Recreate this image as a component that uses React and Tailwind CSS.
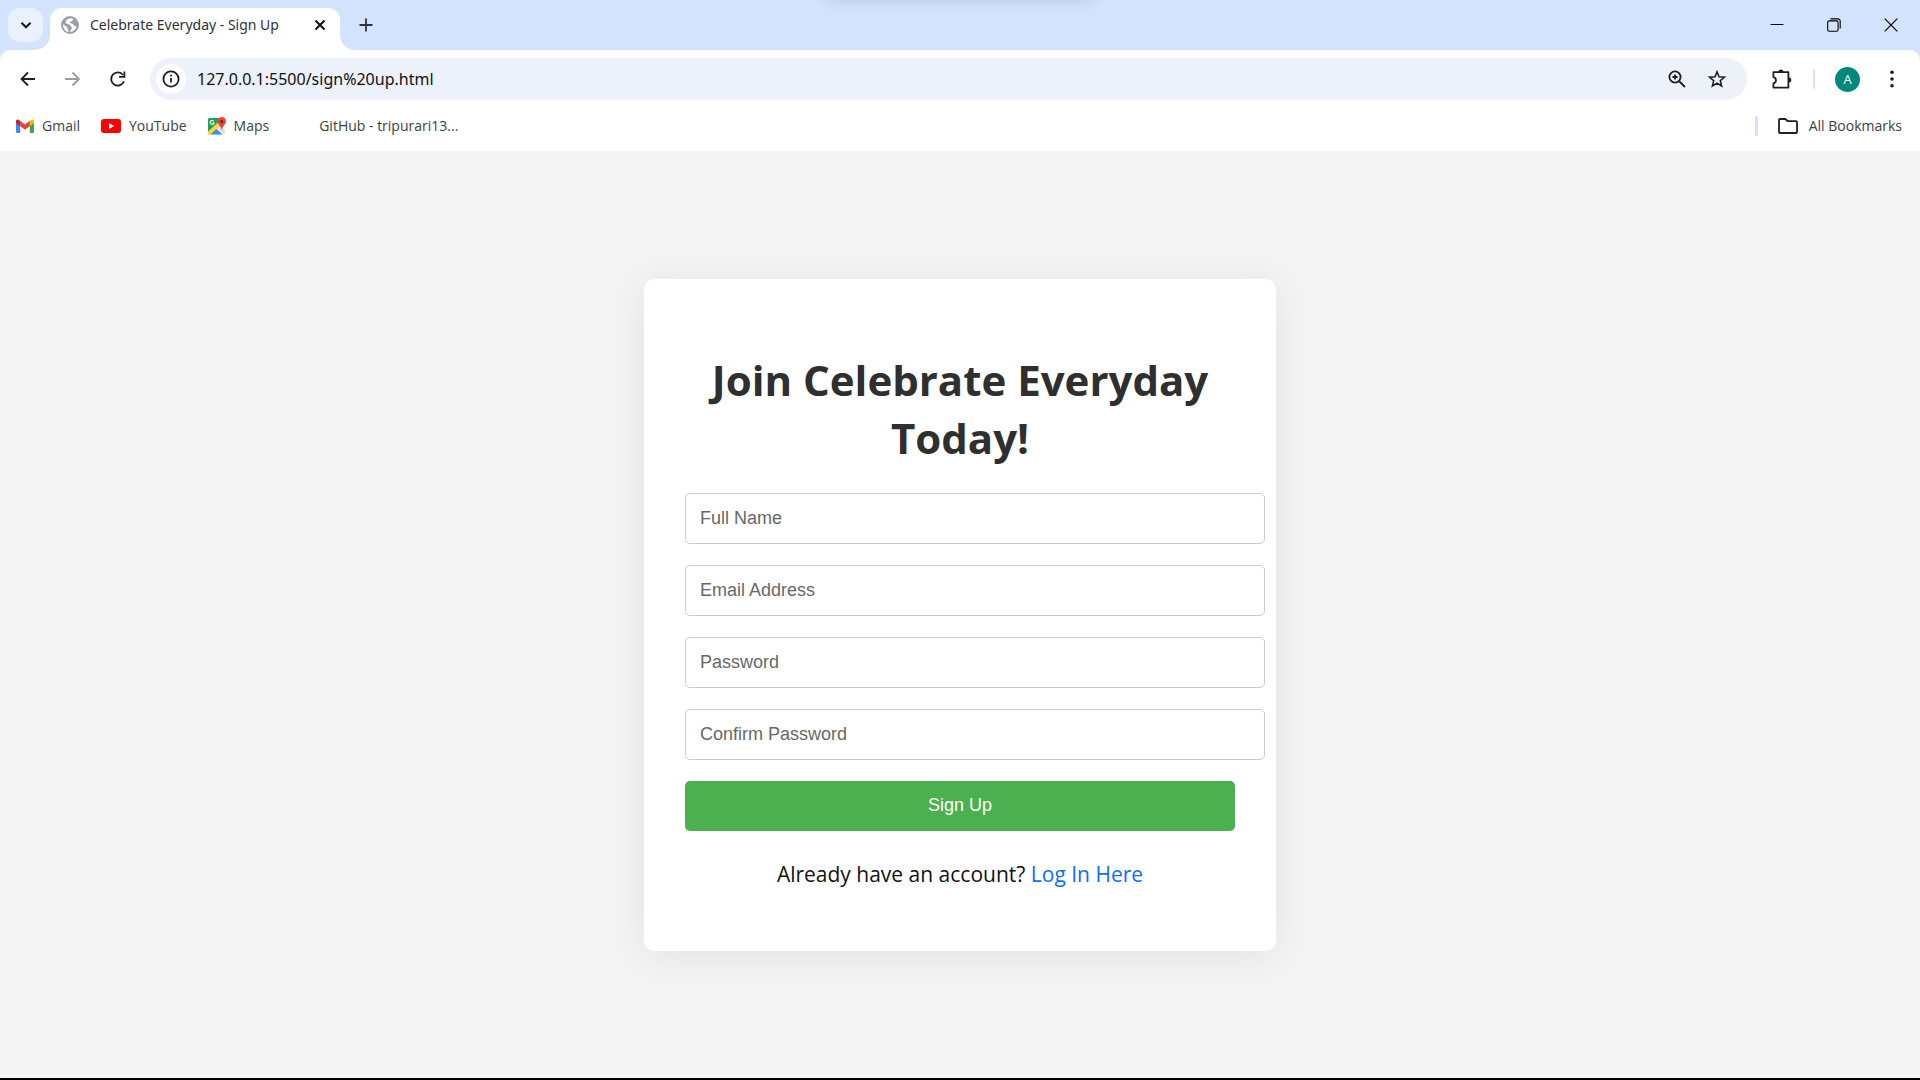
import React from "react";

const ui = "font-['Open_Sans','Noto_Sans',sans-serif]";

function Icon({ size = 20, vb = 20, className = "", children }) {
  return (
    <svg
      width={size}
      height={size}
      viewBox={`0 0 ${vb} ${vb}`}
      fill="none"
      stroke="currentColor"
      strokeWidth="1.8"
      className={`shrink-0 ${className}`}
      aria-hidden="true"
    >
      {children}
    </svg>
  );
}

function GlobeIcon() {
  return (
    <svg width="18" height="18" viewBox="0 0 18 18" className="shrink-0" aria-hidden="true">
      <circle cx="9" cy="9" r="9" fill="#9aa0a6" />
      <path d="M9.3 2.2 C7 2.6 4.8 4 4.6 6 C4.6 7.6 6 8.2 7.6 8.2 C9.2 8.2 9.6 9 9.6 10 C9.6 10.8 10.6 11 11 11.4 C11 12.6 10 13.4 9.4 14.4 L9.2 16 C11.8 15.9 14.6 14 15.6 11 C14.6 9.8 13.2 10 12.4 9 C12 8 11 7.2 9.6 7.2 C8.6 7 8.6 5.8 9.8 5.6 C11.2 5.4 11.4 4.4 12.2 3 C11.4 2.4 10.4 2.1 9.3 2.2 Z" fill="#fff" />
      <path d="M2 8.2 L5.8 11 C7 11.8 6.4 13 7.2 14 L7.6 15.9 C4.4 15.4 1.8 12.4 2 8.2 Z" fill="#fff" />
    </svg>
  );
}

function GmailIcon() {
  return (
    <svg width="18" height="14" viewBox="0 0 18 14" className="shrink-0" aria-hidden="true">
      <path d="M0 3 L4.2 6 V14 H1.3 A1.3 1.3 0 0 1 0 12.7 Z" fill="#4285f4" />
      <path d="M18 3 L13.8 6 V14 H16.7 A1.3 1.3 0 0 0 18 12.7 Z" fill="#34a853" />
      <path d="M13.8 2 L15 1 C16.2 0 18 .7 18 2.2 V4 L13.8 7.2 Z" fill="#fbbc04" />
      <path d="M0 4 V2.2 C0 .7 1.8 0 3 1 L4.2 2 V7.2 Z" fill="#c5221f" />
      <path d="M4.2 1.8 L9 5.4 L13.8 1.8 V7.2 L9 10.8 L4.2 7.2 Z" fill="#ea4335" />
    </svg>
  );
}

function YouTubeIcon() {
  return (
    <svg width="20" height="14" viewBox="0 0 20 14" className="shrink-0" aria-hidden="true">
      <rect width="20" height="14" rx="3" fill="#f00" />
      <path d="M8 4 L13.2 7 L8 10 Z" fill="#fff" />
    </svg>
  );
}

function MapsIcon() {
  return (
    <svg width="18" height="18" viewBox="0 0 18 18" className="shrink-0" aria-hidden="true">
      <rect x="0" y="1" width="16.5" height="16.5" rx="1.5" fill="#e8eaed" />
      <path d="M1.5 1 H11 L12.5 5 L0 17 V2.5 A1.5 1.5 0 0 1 1.5 1 Z" fill="#1e9e58" />
      <path d="M0 14.5 L11.5 4 L14 7 L3 17.5 H0 Z" fill="#fdd835" />
      <path d="M2.5 17.5 L8.3 12 L14.5 17.5 Z" fill="#4285f4" />
      <path d="M9.5 11 L12.5 8.5 L16.5 12.5 V17 Z" fill="#dadce0" />
      <path d="M5.8 4.4 A2 2 0 1 0 6 6 H4.4" fill="none" stroke="#fff" strokeWidth="1.1" />
      <path d="M13.7 0 A4.3 4.3 0 0 1 18 4.3 C18 7.5 14.6 8.6 13.9 12.5 H13.5 C12.8 8.6 9.4 7.5 9.4 4.3 A4.3 4.3 0 0 1 13.7 0 Z" fill="#ea4335" />
      <circle cx="13.7" cy="4.4" r="1.5" fill="#7a1c14" />
    </svg>
  );
}

function TabStrip() {
  return (
    <div className="relative flex h-[50px] items-start bg-[#d3e3fd] pl-2 pt-2">
      <div className="pointer-events-none absolute inset-x-0 top-0 flex h-4 justify-center overflow-hidden">
        <div className="-mt-5 h-5 w-[270px] rounded-xl shadow-[0_0_14px_rgba(60,80,110,0.2)]" />
      </div>
      <button type="button" aria-label="Search tabs" className="flex h-[34px] w-[35px] items-center justify-center rounded-xl bg-[#e9f1fe] text-[#1f1f1f]">
        <Icon size={12} vb={12}>
          <path d="M1.5 3.8 L6 8.2 L10.5 3.8" stroke="#111" strokeWidth="2.1" />
        </Icon>
      </button>
      <div className="relative ml-[7px] flex h-[42px] w-[290px] items-center rounded-t-xl bg-white pb-2 pl-[11px] pr-[13px]">
        <svg className="absolute -left-[15px] bottom-0" width="15" height="15" aria-hidden="true">
          <path d="M15 0 A15 15 0 0 1 0 15 H15 Z" fill="#fff" />
        </svg>
        <svg className="absolute -right-[15px] bottom-0" width="15" height="15" aria-hidden="true">
          <path d="M0 0 A15 15 0 0 0 15 15 H0 Z" fill="#fff" />
        </svg>
        <GlobeIcon />
        <span className="ml-[11px] flex-1 whitespace-nowrap font-['Noto_Sans',sans-serif] text-[14px] leading-5 text-[#303236]">Celebrate Everyday - Sign Up</span>
        <button type="button" aria-label="Close tab" className="flex h-[14px] w-[14px] items-center justify-center">
          <Icon size={12} vb={12}>
            <path d="M1.5 1.5 L10.5 10.5 M10.5 1.5 L1.5 10.5" stroke="#111" strokeWidth="2" />
          </Icon>
        </button>
      </div>
      <button type="button" aria-label="New tab" className="ml-4 flex h-[34px] w-5 items-center justify-center text-[#303236]">
        <Icon size={14} vb={14}>
          <path d="M7 .5 V13.5 M.5 7 H13.5" />
        </Icon>
      </button>
      <div className="ml-auto flex h-[34px] items-center text-black">
        <button type="button" aria-label="Minimize" className="flex h-8 w-[57px] items-center justify-center">
          <Icon size={14} vb={14}>
            <path d="M.5 6.5 H13.5" strokeWidth="1" />
          </Icon>
        </button>
        <button type="button" aria-label="Restore" className="flex h-8 w-[57px] items-center justify-center">
          <Icon size={14} vb={14}>
            <rect x=".7" y="2.9" width="10.4" height="10.4" rx="1.6" strokeWidth="1.1" />
            <path d="M3.4 .9 H11 A2.2 2.2 0 0 1 13.2 3.1 V10.6" strokeWidth="1.1" />
          </Icon>
        </button>
        <button type="button" aria-label="Close" className="flex h-8 w-[58px] items-center justify-center">
          <Icon size={14} vb={14}>
            <path d="M.7 .7 L13.3 13.3 M13.3 .7 L.7 13.3" strokeWidth="1.2" />
          </Icon>
        </button>
      </div>
    </div>
  );
}

function Toolbar() {
  return (
    <div className="flex h-[58px] items-center pl-[17px] pr-[18px] text-[#1f1f1f]">
      <button type="button" aria-label="Back">
        <Icon>
          <path d="M18 10 H4.5 M11 3.5 L4.5 10 L11 16.5" />
        </Icon>
      </button>
      <button type="button" aria-label="Forward" className="ml-[25px] text-[#9c9c9c]">
        <Icon>
          <path d="M3 10 H16.5 M10.5 3.5 L17 10 L10.5 16.5" />
        </Icon>
      </button>
      <button type="button" aria-label="Reload" className="ml-[25px]">
        <Icon>
          <path d="M17 12.2 A6.6 6.6 0 1 1 16 6" />
          <path d="M17.4 2.5 V7.8 H12" />
        </Icon>
      </button>
      <div className="ml-[23px] flex h-[42px] flex-1 items-center rounded-full bg-[#edf1fa] pl-[6px] pr-5">
        <button type="button" aria-label="View site information" className="flex h-[30px] w-[30px] items-center justify-center rounded-full bg-white">
          <Icon size={18} vb={18}>
            <circle cx="9" cy="9" r="7.6" />
            <path d="M9 8 V12.6 M9 4.8 V6.6" />
          </Icon>
        </button>
        <input
          type="text"
          aria-label="Address"
          defaultValue="127.0.0.1:5500/sign%20up.html"
          className="ml-[11px] min-w-0 flex-1 bg-transparent font-['Noto_Sans',sans-serif] text-[16px] leading-6 text-[#111] outline-none"
        />
        <button type="button" aria-label="Zoom">
          <Icon>
            <circle cx="8" cy="8" r="5.6" />
            <path d="M12 12 L18 18 M8 5.4 V10.6 M5.4 8 H10.6" />
          </Icon>
        </button>
        <button type="button" aria-label="Bookmark this tab" className="ml-5">
          <Icon>
            <path d="M10 2.8 L12 7.8 L17.4 8.2 L13.3 11.7 L14.6 17 L10 14.1 L5.4 17 L6.7 11.7 L2.6 8.2 L8 7.8 Z" strokeWidth="1.6" />
          </Icon>
        </button>
      </div>
      <button type="button" aria-label="Extensions" className="ml-6">
        <Icon size={22} vb={22}>
          <path d="M2.4 4.2 H17.4 V19.6 H2.4 V15.4 C5.8 15 5.8 9.6 2.4 9.2 Z" strokeLinejoin="round" />
          <path d="M7.4 4 A2.5 2.5 0 0 1 12.4 4 Z M17.8 9.6 A2.5 2.5 0 0 1 17.8 14.6 Z" fill="currentColor" stroke="none" />
        </Icon>
      </button>
      <div className="ml-5 h-5 w-0.5 rounded bg-[#d3e3fd]" />
      <button type="button" aria-label="Profile" className="ml-5 flex h-[25px] w-[25px] items-center justify-center rounded-full bg-[#00897b] text-[13px] leading-4 text-white">
        A
      </button>
      <button type="button" aria-label="Menu" className="ml-[22px]">
        <Icon>
          <g fill="currentColor" stroke="none">
            <circle cx="10" cy="3.2" r="1.8" />
            <circle cx="10" cy="10" r="1.8" />
            <circle cx="10" cy="16.8" r="1.8" />
          </g>
        </Icon>
      </button>
    </div>
  );
}

function Bookmarks() {
  return (
    <nav aria-label="Bookmarks" className="flex h-[43px] items-center whitespace-nowrap pb-[7px] pl-4 pr-[18px] text-[14px] leading-5 text-[#3c3f43]">
      <a href="#gmail" className="flex items-center gap-2">
        <GmailIcon />
        Gmail
      </a>
      <a href="#youtube" className="ml-[21px] flex items-center gap-2">
        <YouTubeIcon />
        YouTube
      </a>
      <a href="#maps" className="ml-[21px] flex items-center gap-2">
        <MapsIcon />
        Maps
      </a>
      <a href="#github" className="ml-[50px]">GitHub - tripurari13...</a>
      <div className="ml-auto h-5 w-[3px] rounded bg-[#d3e3fd]" />
      <a href="#all" className="ml-5 flex items-center gap-[11px]">
        <svg width="20" height="16" viewBox="0 0 20 16" fill="none" stroke="#1f1f1f" strokeWidth="1.8" strokeLinejoin="round" aria-hidden="true">
          <path d="M1 2 A1 1 0 0 1 2 1 H7.4 L9.6 3.2 H18 A1 1 0 0 1 19 4.2 V14 A1 1 0 0 1 18 15 H2 A1 1 0 0 1 1 14 Z" />
        </svg>
        All Bookmarks
      </a>
    </nav>
  );
}

const fields = [
  { id: "name", label: "Full Name", type: "text" },
  { id: "email", label: "Email Address", type: "email" },
  { id: "password", label: "Password", type: "password" },
  { id: "confirm", label: "Confirm Password", type: "password" },
];

function SignUpCard() {
  return (
    <section className="w-[632px] max-w-full rounded-[10px] bg-white px-[41px] pb-[62px] pt-[72px] text-center shadow-[0_5px_40px_rgba(0,0,0,0.08)]">
      <h1 className="mb-[26px] text-[42px] font-bold leading-[58px] text-[#2f2f2f]">Join Celebrate Everyday Today!</h1>
      <form className="flex flex-col gap-[21px] font-['Liberation_Sans',Arial,sans-serif] text-[18px]" onSubmit={(e) => e.preventDefault()}>
        {fields.map((f) => (
          <input
            key={f.id}
            id={f.id}
            type={f.type}
            aria-label={f.label}
            placeholder={f.label}
            className="box-content h-[49px] w-full rounded-[5px] border border-[#ccc] px-3.5 text-left placeholder:text-[#686868]"
          />
        ))}
        <button type="submit" className="h-[50px] rounded-[5px] bg-[#4caf50] text-white">
          Sign Up
        </button>
      </form>
      <p className="mt-7 text-[21px] leading-[30px] text-[#111]">
        Already have an account? <a href="#login" className="text-[#0d6efd]">Log In Here</a>
      </p>
    </section>
  );
}

export default function App() {
  return (
    <div className={`flex min-h-screen flex-col border-b-2 border-black bg-[#f4f4f4] ${ui}`}>
      <header className="bg-[#d3e3fd]">
        <TabStrip />
        <div className="rounded-t-[10px] bg-white">
          <Toolbar />
          <Bookmarks />
        </div>
      </header>
      <main className="flex flex-1 items-center justify-center">
        <SignUpCard />
      </main>
    </div>
  );
}
